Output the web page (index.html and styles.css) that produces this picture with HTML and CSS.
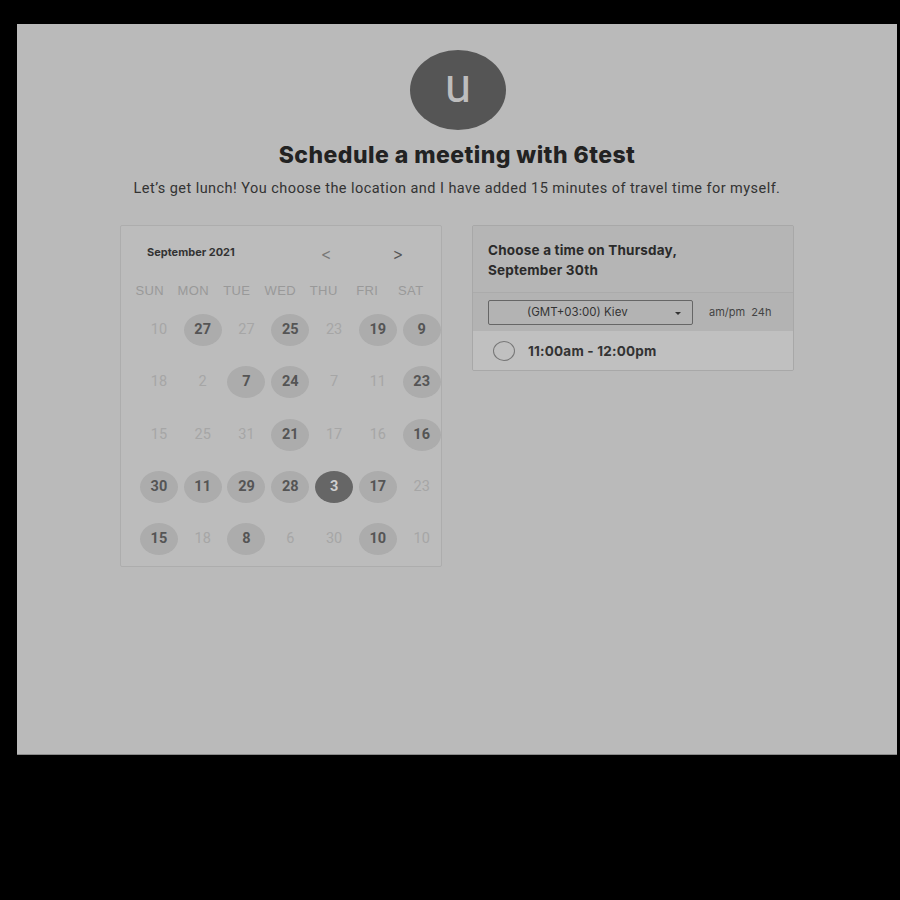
FILE: index.html
```html
<!DOCTYPE html>
<html>
<head>
<meta charset="utf-8">
<link rel="stylesheet" href="styles.css">
</head>
<body>
<div class="panel">
  <div class="avatar">u</div>
  <h1 class="title">Schedule a meeting with 6test</h1>
  <p class="subtitle">Let’s get lunch! You choose the location and I have added 15 minutes of travel time for myself.</p>
  <div class="cards">
    <div class="calendar">
      <div class="cal-head">
        <span class="month">September 2021</span>
        <span class="nav prev">&lt;</span>
        <span class="nav next">&gt;</span>
      </div>
      <div class="weekdays">
        <span>SUN</span><span>MON</span><span>TUE</span><span>WED</span><span>THU</span><span>FRI</span><span>SAT</span>
      </div>
      <div class="days">
        <span>10</span><span class="av">27</span><span>27</span><span class="av">25</span><span>23</span><span class="av">19</span><span class="av">9</span>
        <span>18</span><span>2</span><span class="av">7</span><span class="av">24</span><span>7</span><span>11</span><span class="av">23</span>
        <span>15</span><span>25</span><span>31</span><span class="av">21</span><span>17</span><span>16</span><span class="av">16</span>
        <span class="av">30</span><span class="av">11</span><span class="av">29</span><span class="av">28</span><span class="sel">3</span><span class="av">17</span><span>23</span>
        <span class="av">15</span><span>18</span><span class="av">8</span><span>6</span><span>30</span><span class="av">10</span><span>10</span>
      </div>
    </div>
    <div class="times">
      <div class="times-head">Choose a time on Thursday,<br>September 30th</div>
      <div class="tz-row">
        <div class="tz-select"><span>(GMT+03:00) Kiev</span><span class="caret"></span></div>
        <div class="fmt">am/pm&nbsp; 24h</div>
      </div>
      <div class="slot">
        <span class="radio"></span>
        <span class="slot-text">11:00am - 12:00pm</span>
      </div>
    </div>
  </div>
</div>
</body>
</html>
```
FILE: styles.css
```css
html, body {
  margin: 0;
  padding: 0;
  background: #000;
  width: 900px;
  height: 900px;
}
.panel {
  margin: 24px 0 0 17px;
  width: 880px;
  height: 731px;
  background: #bababa;
  border-bottom: 1px solid #8a8a8a;
  display: flex;
  flex-direction: column;
  align-items: center;
  padding-top: 26px;
  box-sizing: border-box;
  font-family: Inter, "Liberation Sans", sans-serif;
}
.avatar {
  width: 96px;
  height: 80px;
  border-radius: 50%;
  background: #555555;
  color: #bdbdbd;
  font-family: Roboto, sans-serif;
  font-size: 48px;
  font-weight: 400;
  line-height: 72px;
  text-align: center;
  margin-left: 2px;
}
.title {
  margin: 11px 0 0 0;
  font-size: 23px;
  line-height: 28px;
  font-weight: 800;
  color: #222;
  letter-spacing: 0.45px;
}
.subtitle {
  margin: 11px 0 0 0;
  font-family: Roboto, sans-serif;
  font-size: 14.5px;
  line-height: 18px;
  color: #333;
  letter-spacing: 0.45px;
}
.cards {
  margin-top: 27px;
  display: flex;
  gap: 30px;
  align-items: flex-start;
}
.calendar {
  width: 322px;
  height: 342px;
  box-sizing: border-box;
  border: 1px solid #adadad;
  border-radius: 2px;
  background: #bcbcbc;
  padding: 16px 0 0 0;
}
.cal-head {
  display: flex;
  align-items: center;
  height: 20px;
  padding-left: 26px;
}
.month {
  flex: 0 0 169px;
  font-size: 11px;
  font-weight: 700;
  color: #333;
}
.nav {
  flex: 0 0 20px;
  text-align: center;
  font-family: "DejaVu Sans", sans-serif;
  font-size: 15px;
  color: #777;
  margin-top: 6px;
  transform: scaleX(0.8);
}
.nav.next {
  color: #555;
  margin-left: 52px;
}
.weekdays {
  display: grid;
  grid-template-columns: repeat(7, 43.5px);
  margin: 20px 0 0 7px;
  height: 18px;
}
.weekdays span {
  text-align: center;
  font-family: "Liberation Sans", sans-serif;
  font-size: 13px;
  line-height: 18px;
  color: #999;
  letter-spacing: 0.4px;
}
.days {
  display: grid;
  grid-template-columns: repeat(7, 43.8px);
  grid-auto-rows: 52.3px;
  margin: 4px 0 0 16px;
}
.days span {
  justify-self: center;
  align-self: center;
  width: 38px;
  height: 32px;
  border-radius: 50%;
  text-align: center;
  line-height: 32px;
  font-family: Roboto, sans-serif;
  font-size: 14.5px;
  color: #a6a6a6;
}
.days span.av {
  background: #acacac;
  color: #555;
  font-weight: 700;
}
.days span.sel {
  background: #666;
  color: #cfcfcf;
  font-weight: 700;
}
.times {
  width: 322px;
  box-sizing: border-box;
  border: 1px solid #a8a8a8;
  border-radius: 2px;
  overflow: hidden;
}
.times-head {
  background: #b5b5b5;
  padding: 14px 15px 12px 15px;
  height: 67px;
  box-sizing: border-box;
  font-size: 13.5px;
  line-height: 20px;
  font-weight: 700;
  color: #2a2a2a;
  border-bottom: 1px solid #ababab;
  letter-spacing: 0.2px;
}
.tz-row {
  background: #b3b3b3;
  height: 38px;
  display: flex;
  align-items: center;
  padding-left: 15px;
}
.tz-select {
  width: 205px;
  height: 25px;
  box-sizing: border-box;
  border: 1px solid #666;
  border-radius: 2px;
  display: flex;
  align-items: center;
  position: relative;
  font-size: 11.5px;
  color: #333;
}
.tz-select span:first-child {
  margin-left: 38px;
}
.caret {
  position: absolute;
  right: 11px;
  top: 11px;
  width: 0;
  height: 0;
  border-left: 3px solid transparent;
  border-right: 3px solid transparent;
  border-top: 3px solid #333;
}
.fmt {
  margin-left: 16px;
  font-size: 11px;
  color: #444;
}
.slot {
  background: #c0c0c0;
  height: 39px;
  display: flex;
  align-items: center;
  padding-left: 20px;
}
.radio {
  width: 22px;
  height: 20px;
  border: 1.5px solid #777;
  border-radius: 50%;
  box-sizing: border-box;
}
.slot-text {
  margin-left: 13px;
  font-size: 13.5px;
  font-weight: 700;
  color: #333;
  letter-spacing: 0.2px;
}
```
